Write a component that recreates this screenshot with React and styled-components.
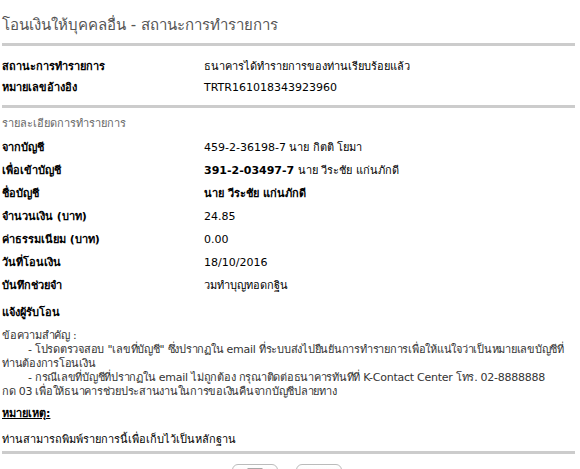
import styled, { createGlobalStyle } from "styled-components";

const GlobalStyle = createGlobalStyle`
  body {
    margin: 0;
    background: #fff;
    font-family: Verdana, "DejaVu Sans", "Noto Sans", sans-serif;
    font-size: 11px;
    color: #000;
    overflow: hidden;
  }
`;

const Page = styled.div`
  width: 575px;
  height: 469px;
  overflow: hidden;
  padding: 14px 0 0 2px;
  box-sizing: border-box;
`;

const Title = styled.h1`
  margin: 0;
  font-size: 15px;
  font-weight: normal;
  color: #555;
  line-height: 22px;
  padding-bottom: 7px;
  border-bottom: 3px solid #ccc;
`;

const Table = styled.div`
  display: grid;
  grid-template-columns: 202px 1fr;
  padding: ${(p) => p.$pad || "0"};
  border-bottom: ${(p) => (p.$line ? "3px solid #ccc" : "none")};
`;

const Label = styled.div`
  font-weight: bold;
  line-height: ${(p) => p.$lh || "23px"};
`;

const Value = styled.div`
  font-weight: ${(p) => (p.$bold ? "bold" : "normal")};
  line-height: ${(p) => p.$lh || "23px"};
`;

const SectionHead = styled.div`
  color: #666;
  line-height: 20px;
  padding: 6px 0 2px;
`;

const Notify = styled.div`
  font-weight: bold;
  margin-top: 7px;
  line-height: 18px;
`;

const Notice = styled.div`
  margin-top: 7px;
  color: #333;
  line-height: 14px;
  white-space: nowrap;
  letter-spacing: -0.25px;
`;

const Indent = styled.div`
  padding-left: 26px;
`;

const Remark = styled.div`
  font-weight: bold;
  text-decoration: underline;
  margin-top: 6px;
  line-height: 18px;
`;

const Footer = styled.div`
  margin-top: 8px;
  line-height: 18px;
  padding-bottom: 2px;
  border-bottom: 3px solid #ccc;
`;

const Buttons = styled.div`
  display: flex;
  justify-content: center;
  gap: 18px;
  padding-top: 10px;
  margin-left: -4px;
`;

const IconButton = styled.div`
  width: 46px;
  height: 26px;
  border: 1px solid #bbb;
  border-radius: 6px;
  background: linear-gradient(#fff, #eee);
  display: flex;
  justify-content: center;
  padding-top: 3px;
  box-sizing: border-box;
`;

const details = [
  ["จากบัญชี", "459-2-36198-7 นาย กิตติ โยมา"],
  ["เพื่อเข้าบัญชี", <><b>391-2-03497-7</b> นาย วีระชัย แก่นภักดี</>, true],
  ["ชื่อบัญชี", "นาย วีระชัย แก่นภักดี", true],
  ["จำนวนเงิน (บาท)", "24.85"],
  ["ค่าธรรมเนียม (บาท)", "0.00"],
  ["วันที่โอนเงิน", "18/10/2016"],
  ["บันทึกช่วยจำ", "วมทำบุญทอดกฐิน"],
];

export default function App() {
  return (
    <Page>
      <GlobalStyle />
      <Title>โอนเงินให้บุคคลอื่น - สถานะการทำรายการ</Title>
      <Table $pad="10px 0 7px" $line>
        <Label $lh="21px">สถานะการทำรายการ</Label>
        <Value $lh="21px">ธนาคารได้ทำรายการของท่านเรียบร้อยแล้ว</Value>
        <Label $lh="21px">หมายเลขอ้างอิง</Label>
        <Value $lh="21px">TRTR161018343923960</Value>
      </Table>
      <SectionHead>รายละเอียดการทำรายการ</SectionHead>
      <Table>
        {details.map(([l, v, b]) => (
          <>
            <Label key={l}>{l}</Label>
            <Value $bold={b && typeof v === "string"}>{v}</Value>
          </>
        ))}
      </Table>
      <Notify>แจ้งผู้รับโอน</Notify>
      <Notice>
        <div>ข้อความสำคัญ :</div>
        <Indent>- โปรดตรวจสอบ "เลขที่บัญชี" ซึ่งปรากฏใน email ที่ระบบส่งไปยืนยันการทำรายการเพื่อให้แน่ใจว่าเป็นหมายเลขบัญชีที่</Indent>
        <div>ท่านต้องการโอนเงิน</div>
        <Indent>- กรณีเลขที่บัญชีที่ปรากฏใน email ไม่ถูกต้อง กรุณาติดต่อธนาคารทันทีที่ K-Contact Center โทร. 02-8888888</Indent>
        <div>กด 03 เพื่อให้ธนาคารช่วยประสานงานในการขอเงินคืนจากบัญชีปลายทาง</div>
      </Notice>
      <Remark>หมายเหตุ:</Remark>
      <Footer>ท่านสามารถพิมพ์รายการนี้เพื่อเก็บไว้เป็นหลักฐาน</Footer>
      <Buttons>
        <IconButton>
          <svg width="20" height="16" viewBox="0 0 20 16">
            <rect x="3" y="1" width="14" height="12" fill="#fff" stroke="#555" />
          </svg>
        </IconButton>
        <IconButton>
          <svg width="20" height="16" viewBox="0 0 20 16">
            <rect x="6" y="2" width="8" height="5" fill="#999" />
          </svg>
        </IconButton>
      </Buttons>
    </Page>
  );
}
